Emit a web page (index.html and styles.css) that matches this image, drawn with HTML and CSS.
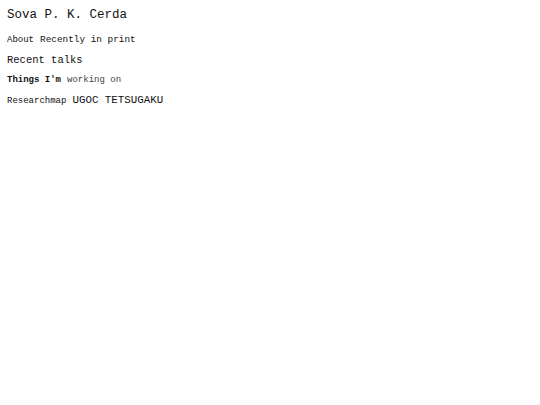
FILE: index.html
```html
<!DOCTYPE html>
<html>
<head>
<meta charset="utf-8">
<link rel="stylesheet" href="styles.css">
</head>
<body>
<h1 class="title">Sova P. K. Cerda</h1>
<nav class="links">
  <div class="row"><a class="s9" href="#">About</a> <a class="s10" href="#">Recently in print</a></div>
  <div class="row"><a class="s11" href="#">Recent talks</a></div>
  <div class="row"><a class="s9 bold" href="#">Things I'm</a> <a class="s9 light" href="#">working on</a></div>
  <div class="row"><a class="s9" href="#">Researchmap</a> <a class="s11 wide" href="#">UGOC TETSUGAKU</a></div>
</nav>
</body>
</html>
```
FILE: styles.css
```css
html, body {
  margin: 0;
  background: #fff;
}
body {
  padding: 7px 7px 0;
  font-family: "Liberation Mono", "DejaVu Sans Mono", monospace;
  color: #111;
}
.title {
  font-size: 12.5px;
  font-weight: normal;
  line-height: 16px;
  margin: 0 0 7px;
}
.row {
  font-size: 10px;
  line-height: 20px;
  height: 20px;
}
.links a {
  color: #111;
  text-decoration: none;
}
.s9 { font-size: 9px; }
.s10 { font-size: 9.4px; }
.s11 { font-size: 10.5px; }
.links .wide { font-size: 10.8px; }
.bold { font-weight: bold; }
.links .light { color: #444; }
```
